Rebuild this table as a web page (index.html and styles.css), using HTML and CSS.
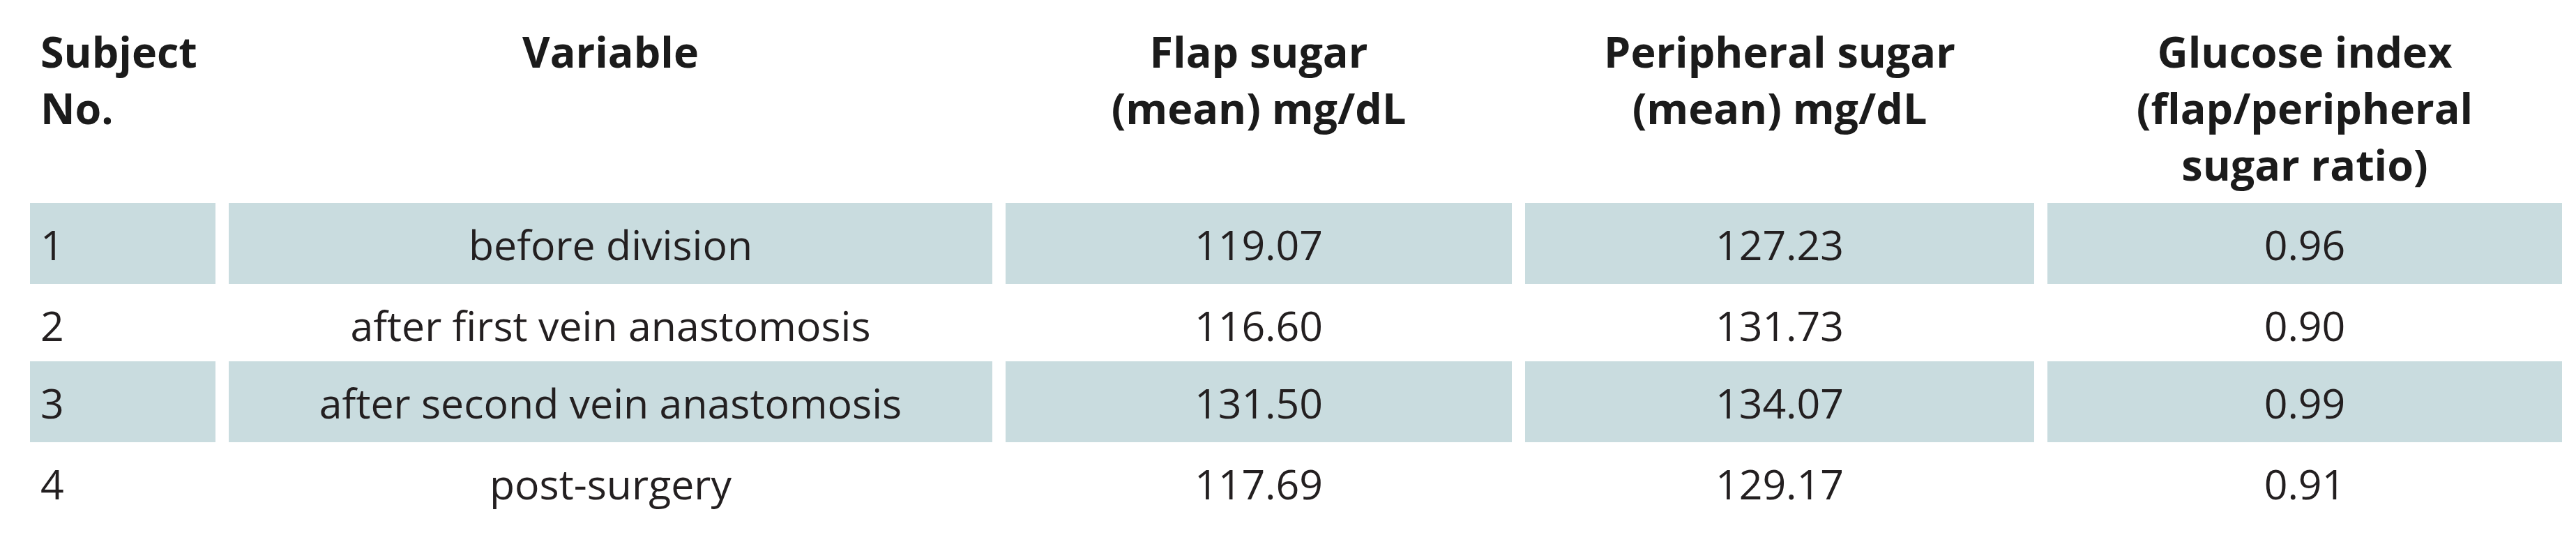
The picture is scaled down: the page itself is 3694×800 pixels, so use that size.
FILE: index.html
```html
<!DOCTYPE html>
<html lang="en">
<head>
<meta charset="utf-8">
<title>Glucose index table</title>
<link rel="stylesheet" href="styles.css">
</head>
<body>
<table class="data">
  <colgroup>
    <col class="c-no">
    <col class="c-var">
    <col class="c-flap">
    <col class="c-per">
    <col class="c-idx">
  </colgroup>
  <thead>
    <tr class="head">
      <th class="left">Subject<br>No.</th>
      <th>Variable</th>
      <th>Flap sugar<br>(mean) mg/dL</th>
      <th>Peripheral sugar<br>(mean) mg/dL</th>
      <th>Glucose index<br>(flap/peripheral<br>sugar ratio)</th>
    </tr>
  </thead>
  <tbody>
    <tr class="shaded">
      <td class="left">1</td>
      <td>before division</td>
      <td>119.07</td>
      <td>127.23</td>
      <td>0.96</td>
    </tr>
    <tr class="plain">
      <td class="left">2</td>
      <td>after first vein anastomosis</td>
      <td>116.60</td>
      <td>131.73</td>
      <td>0.90</td>
    </tr>
    <tr class="shaded">
      <td class="left">3</td>
      <td>after second vein anastomosis</td>
      <td>131.50</td>
      <td>134.07</td>
      <td>0.99</td>
    </tr>
    <tr class="plain">
      <td class="left">4</td>
      <td>post-surgery</td>
      <td>117.69</td>
      <td>129.17</td>
      <td>0.91</td>
    </tr>
  </tbody>
</table>
</body>
</html>
```

FILE: styles.css
```css
html, body {
  margin: 0;
  padding: 0;
  background: #ffffff;
}

body {
  font-family: "Open Sans", "Liberation Sans", sans-serif;
  color: #231f20;
}

.data {
  border-collapse: separate;
  border-spacing: 19px 0;
  table-layout: fixed;
  margin-left: 24px;
  width: 3669px;
}

.c-no { width: 266px; }
.c-var { width: 1095px; }
.c-flap { width: 726px; }
.c-per { width: 730px; }
.c-idx { width: 738px; }

.head th {
  height: 291px;
  box-sizing: border-box;
  padding: 33px 0 0 0;
  vertical-align: top;
  text-align: center;
  font-size: 61px;
  font-weight: 700;
  line-height: 81px;
  color: #1b1b1b;
}

.head th.left {
  text-align: left;
  padding-left: 15px;
}

tbody td {
  box-sizing: border-box;
  padding: 19px 0 0 0;
  vertical-align: top;
  text-align: center;
  font-size: 59px;
  line-height: 80px;
  white-space: nowrap;
}

tbody td.left {
  text-align: left;
  padding-left: 15px;
}

.shaded td {
  height: 116px;
  background: #c9dcdf;
}

.plain td {
  height: 111px;
  background: transparent;
}
```
